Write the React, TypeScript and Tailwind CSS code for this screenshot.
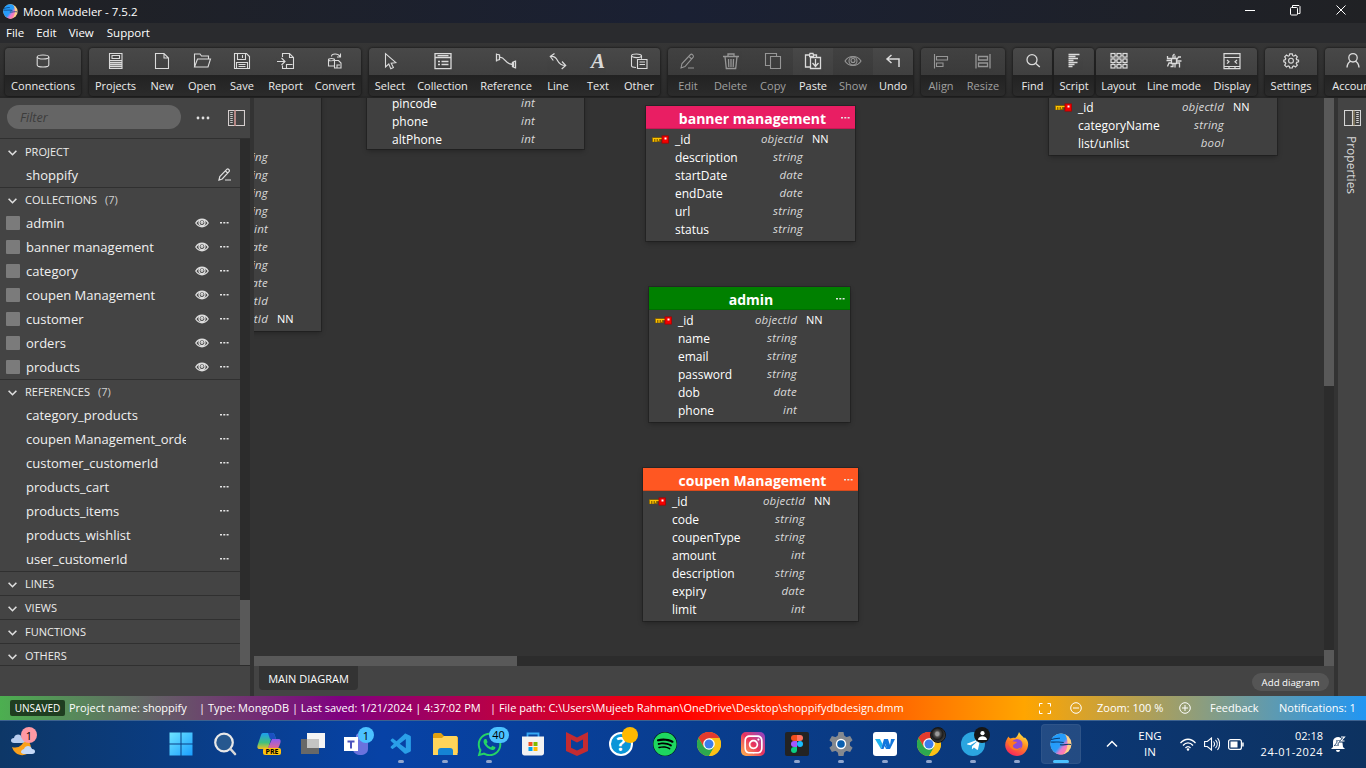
import React from "react";
import { FaWhatsapp, FaSpotify, FaInstagram, FaTelegramPlane } from "react-icons/fa";
import { VscVscode } from "react-icons/vsc";

type Kids = { children: React.ReactNode };

function Ico({ children, w = 20 }: Kids & { w?: number }) {
  return (
    <svg width={w} height={18} viewBox={`0 0 ${w} 18`} fill="none" stroke="currentColor" strokeWidth={1.1} className="block shrink-0 opacity-90">
      {children}
    </svg>
  );
}

const icons: Record<string, React.ReactNode> = {
  connections: (
    <Ico>
      <ellipse cx="10" cy="5" rx="5.800" ry="2" />
      <path d="M4.200 5v8c0 1 2.500 2 5.800 2s5.800-1 5.800-2V5" />
    </Ico>
  ),
  projects: (
    <Ico>
      <path d="M3.500 1.500h12.500v15h-12.500z M6 3.500h7.500v3h-7.500z M3.500 8.500h12.500" />
      <path d="M4 10.500h12 M4 12.500h12 M4 14.500h12" strokeWidth="1.300" />
    </Ico>
  ),
  new: (
    <Ico>
      <path d="M3.500 1.500h8.500l4.500 4.500v10.500h-13z M12 1.500v4.500h4.500" />
    </Ico>
  ),
  open: (
    <Ico>
      <path d="M2.500 14.500v-12.500h5.500l1.500 2h7v2.500 M2.500 15l3-8h13l-2.500 8z" />
    </Ico>
  ),
  save: (
    <Ico>
      <path d="M2.500 1.500h12l3 3v12h-15z M5.500 1.500v6h8v-6 M10.500 3v3 M4.500 16.500v-6h11v6 M6.500 12.500h7 M6.500 14.500h7" />
    </Ico>
  ),
  report: (
    <Ico>
      <path d="M6.500 5v-3.500h7l4 4v11h-11v-3 M13.500 1.500v4h4 M1 9.500h7.500 M5.500 6l3.500 3.500-3.500 3.500 M10.500 16v-3.500h6" />
    </Ico>
  ),
  convert: (
    <Ico>
      <path d="M3.500 7.500c0-1.300 6-1.300 6 0v6.500h-6z M3.500 8c1 1 4 1 6 0 M9.500 8.500h4l2.500 2.500v5h-6.500z M12 16v-3h3 M6.500 4.500c0-3 6.500-3.500 8.500 0 M15.500 1.500v3.500h-3.500" />
    </Ico>
  ),
  select: (
    <Ico>
      <path d="M5.500 1.700v13.300l3.300-3 2 4.800 2.600-1.200-2.200-4.400 4.600-.5z" />
    </Ico>
  ),
  collection: (
    <Ico>
      <path d="M2 1.600h16v15H2z M2 5.500h16 M4.500 3.600h11 M5 9.500h2 M8.500 9.500h7 M5 12.500h2 M8.500 12.500h7" strokeWidth="1.300" />
    </Ico>
  ),
  reference: (
    <Ico w={22}>
      <path d="M1.500 1.500v8 M1.500 2l3 1v4.500l-3 1 M4.500 5.200c6-.5 6 8 13 7 M20.500 8.500v8 M20.500 9l-3 1.500v4l3 1.500 M18.500 10v5" strokeWidth="1.300" />
    </Ico>
  ),
  line: (
    <Ico>
      <path d="M2.500 4.500c3-.5 5 0 7 4s4 5 8 5 M6.500 1.500l-4.200 3 3 4 M14 9.500l3.700 4-4 3.500" strokeWidth="1.200" />
    </Ico>
  ),
  other: (
    <Ico>
      <ellipse cx="7.500" cy="3.800" rx="5" ry="1.800" />
      <path d="M2.500 3.800v10c0 1 2 1.700 4.500 1.700 M12.500 3.800v3 M8.500 7.500h9.500v9h-9.500z M10.500 10h5.500 M10.500 12.500h5.500" />
    </Ico>
  ),
  edit: (
    <Ico>
      <path d="M3 16l1-4.500 8.500-9c1.300-1 3.700 1 2.700 2.600L7 14.500z M11 4.500l3 2.800 M10 16h6" />
    </Ico>
  ),
  delete: (
    <Ico>
      <path d="M2 4.500h16 M7 4V2h6v2 M4 4.500l1.300 12h9.400L16 4.500 M7.500 7l.3 8 M10 7v8 M12.500 7l-.3 8" strokeWidth="1.300" />
    </Ico>
  ),
  copy: (
    <Ico>
      <path d="M7.500 4.500h10v12h-10z M13.500 4v-2.500h-11v12h4.500" />
    </Ico>
  ),
  paste: (
    <Ico>
      <path d="M7.500 5.500h10v11h-10z M13.500 5v-2h-3l-.5-1.500h-3l-.5 1.500h-4v12h4.500 M6 4.500h5 M12.500 7v7 M9.500 11l3 3.500 3-3.500" strokeWidth="1.300" />
    </Ico>
  ),
  show: (
    <Ico>
      <path d="M2 9c3.500-6 12.500-6 16 0-3.500 6-12.500 6-16 0z" />
      <circle cx="10" cy="9" r="4" />
      <circle cx="10" cy="8.500" r="2" />
    </Ico>
  ),
  undo: (
    <Ico>
      <path d="M8.500 3L4 7l4.500 4 M4 7h12v8" strokeWidth="1.500" />
    </Ico>
  ),
  align: (
    <Ico>
      <path d="M3.500 2v14.500 M5.500 4.500h11v3.500h-11z M5.500 11h6.500v3.500H5.500z" />
    </Ico>
  ),
  resize: (
    <Ico>
      <path d="M3 2v14.500 M17 2v14.500 M5.500 4.500h9v3.500h-9z M5.500 11h9v3.500h-9z" strokeWidth="1.300" />
    </Ico>
  ),
  find: (
    <Ico>
      <circle cx="9" cy="7.700" r="5" strokeWidth="1.300" />
      <path d="M12.800 11.500l4 3.500" strokeWidth="1.400" />
    </Ico>
  ),
  script: (
    <Ico>
      <path d="M4.500 2.500h11 M4.500 4.500h7 M4.500 6.500h9.500 M4.500 8.500h5 M4.500 10.500h9 M4.500 12.500h6 M4.500 14.500h4" strokeWidth="1.300" />
    </Ico>
  ),
  layout: (
    <Ico>
      {[1.5, 7, 12.5].map((y) =>
        [2, 8, 14].map((x) => <rect key={`${x}-${y}`} x={x} y={y} width="4" height="3.500" strokeWidth="1.200" />)
      )}
      <path d="M6 3.300h2 M12 3.300h2 M6 8.800h2 M12 8.800h2 M6 14.300h2 M12 14.300h2 M4 5v2 M10 5v2 M16 5v2 M4 10.500v2 M10 10.500v2 M16 10.500v2" strokeWidth=".8" />
    </Ico>
  ),
  linemode: (
    <Ico>
      <path d="M7.500 6.500h5v5h-5z M9 6.500V3.500l1.500-1.500 M11 6.500v-3 M3.500 4v2.500h4 M17 5h-2.500l-1.500 2.500 M2.500 8.500h5 M12.500 9h5 M7.500 11h-2.500l-1.500 3.500 M12.500 11h3v4.500 M9 11.500v3h-2.500 M11 11.500v4" strokeWidth="1.300" />
    </Ico>
  ),
  display: (
    <Ico>
      <path d="M2 1.600h16v15H2z M2 5.500h16 M2 14.500h16 M5 8l2 1.800-2 1.800 M15 8l-2 1.800 2 1.800 M7 14.500v2 M13 14.500v2" strokeWidth="1.200" />
    </Ico>
  ),
  settings: (
    <Ico>
      <path d="M8.600 2h2.800l.5 2.100 1.200.5 1.900-1.200 2 2-1.200 1.900.5 1.200 2.100.5v2l-2.100.5-.5 1.200 1.200 1.900-2 2-1.900-1.200-1.200.5-.5 1.900H8.600l-.5-1.900-1.200-.5L5 16.600l-2-2 1.200-1.900-.5-1.200L2 11V9l1.700-.5.500-1.200L3 5.400l2-2 1.900 1.200 1.200-.5z" transform="translate(1 0) scale(.9)" strokeWidth="1.300" />
      <circle cx="10" cy="8.700" r="2.400" />
    </Ico>
  ),
  account: (
    <Ico>
      <circle cx="10" cy="5.800" r="4.200" strokeWidth="1.300" />
      <path d="M4 15.500c.3-4 2-5.500 4-6.300 M16 15.500c-.3-4-2-5.500-4-6.300" strokeWidth="1.400" />
    </Ico>
  ),
};

type Btn = { id: string; label: string; w: string; off?: boolean };

function ToolButton({ b }: { b: Btn }) {
  return (
    <div className={`flex h-[45px] shrink-0 flex-col ${b.w} ${b.off ? "text-[#a0a0a0]" : "text-[#ececec]"}`}>
      <div className={`flex h-[27px] items-center justify-center pb-px ${b.off ? "bg-linear-to-b from-[#414141] to-[#3a3a3a]" : "bg-linear-to-b from-[#484848] to-[#404040]"}`}>
        {b.id === "text" ? (
          <span className="font-['Liberation_Serif',serif] text-[21px] leading-none font-bold italic opacity-90">A</span>
        ) : (
          icons[b.id]
        )}
      </div>
      <div className="flex h-[18px] justify-center bg-linear-to-b from-[#222] to-[#2a2a2a] text-[11px] leading-[21px] whitespace-nowrap">{b.label}</div>
    </div>
  );
}

function Group({ items }: { items: Btn[] }) {
  return (
    <div className="flex shrink-0 overflow-hidden rounded-[4px] shadow-[0_0_2px_1px_rgba(0,0,0,0.35)]">
      {items.map((b) => (
        <ToolButton key={b.label} b={b} />
      ))}
    </div>
  );
}

const groups: Btn[][] = [
  [{ id: "connections", label: "Connections", w: "w-[76px]" }],
  [
    { id: "projects", label: "Projects", w: "w-[53px]" },
    { id: "new", label: "New", w: "w-10" },
    { id: "open", label: "Open", w: "w-10" },
    { id: "save", label: "Save", w: "w-10" },
    { id: "report", label: "Report", w: "w-[47px]" },
    { id: "convert", label: "Convert", w: "w-[52px]" },
  ],
  [
    { id: "select", label: "Select", w: "w-[42px]" },
    { id: "collection", label: "Collection", w: "w-[63px]" },
    { id: "reference", label: "Reference", w: "w-16" },
    { id: "line", label: "Line", w: "w-10" },
    { id: "text", label: "Text", w: "w-10" },
    { id: "other", label: "Other", w: "w-[42px]" },
  ],
  [
    { id: "edit", label: "Edit", w: "w-10", off: true },
    { id: "delete", label: "Delete", w: "w-[45px]", off: true },
    { id: "copy", label: "Copy", w: "w-10", off: true },
    { id: "paste", label: "Paste", w: "w-10" },
    { id: "show", label: "Show", w: "w-10", off: true },
    { id: "undo", label: "Undo", w: "w-10" },
  ],
  [
    { id: "align", label: "Align", w: "w-10", off: true },
    { id: "resize", label: "Resize", w: "w-11", off: true },
  ],
];

function Dots({ big }: { big?: boolean }) {
  return big ? (
    <svg width="14" height="4" viewBox="0 0 14 4" fill="#e0e0e0">
      <circle cx="2" cy="2" r="1.400" /><circle cx="7" cy="2" r="1.400" /><circle cx="12" cy="2" r="1.400" />
    </svg>
  ) : (
    <svg width="9" height="2" viewBox="0 0 9 2" fill="#e4e4e4">
      <path d="M0 0h2v1.600H0z M3.300 0h2v1.600h-2z M6.600 0h2v1.600h-2z" />
    </svg>
  );
}

function Eye() {
  return (
    <svg width="14" height="10" viewBox="0 0 14 10" fill="none" stroke="#dedede" strokeWidth="1.300">
      <path d="M.8 5c3-5 9.400-5 12.400 0-3 5-9.400 5-12.400 0z" />
      <circle cx="7" cy="4.700" r="3" />
      <circle cx="7" cy="4.300" r="1" />
    </svg>
  );
}

function Head({ title, count, short }: { title: string; count?: string; short?: boolean }) {
  return (
    <div className={`flex items-center overflow-hidden pl-2 text-[#ececec] ${short ? "h-[21px] pt-[3px]" : "h-6"}`}>
      <svg width="9" height="6" viewBox="0 0 9 6" fill="none" stroke="#e0e0e0" strokeWidth="1.600" className="mt-0.5 shrink-0">
        <path d="M.6.8l3.900 3.900L8.400.8" />
      </svg>
      <span className="mb-px ml-2 text-[11px] leading-6">{title}</span>
      {count && <span className="mb-px ml-2 text-[11px] leading-6 text-[#cfcfcf]">{count}</span>}
    </div>
  );
}

function Row({ name, box, eye }: { name: string; box?: boolean; eye?: boolean }) {
  return (
    <div className="flex h-6 items-center pl-1.5 text-[#f0f0f0]">
      <div className={`mb-0.5 h-[14px] w-[14px] shrink-0 rounded-[1px] ${box ? "bg-[#7b7b7b]" : ""}`} />
      <span className="mb-0.5 ml-1.5 w-[160px] shrink-0 overflow-hidden text-[13px] leading-6 whitespace-nowrap">{name}</span>
      <div className="ml-[9px] flex w-[14px] pb-0.5">{eye && <Eye />}</div>
      <div className="ml-[11px] pb-0.5"><Dots /></div>
    </div>
  );
}

function Sidebar() {
  return (
    <div className="flex w-[250px] shrink-0 flex-col bg-[#444]">
      <div className="flex h-[41px] shrink-0 items-center border-b border-[#303030] pl-[7px]">
        <div className="mb-0.5 flex h-6 w-[174px] items-center rounded-full bg-[#656565] pt-0.5 pl-[13px] text-[12.500px] text-[#3c3c3c] italic">Filter</div>
        <div className="ml-[15px] flex"><Dots big /></div>
        <svg width="17" height="16" viewBox="0 0 17 16" fill="none" stroke="#d6cfcf" className="ml-[18px]">
          <path d="M.5.500h16v15H.5z M7 1v14" strokeWidth="1.100" />
          <path d="M3.500 2v12" stroke="#c8c8c8" strokeDasharray="1 1" strokeWidth="2.500" />
          <path d="M7 0v16" stroke="#c48480" strokeWidth="1.400" />
        </svg>
      </div>
      <div className="flex h-[527px]">
        <div className="w-[240px] overflow-hidden">
          <div className="h-[49px] border-b border-[#303030] pt-px">
            <Head title="PROJECT" />
            <div className="flex h-[23px] items-center pl-[26px] text-[13px] text-[#f0f0f0]">
              <span className="w-[192px]">shoppify</span>
              <svg width="14" height="13" viewBox="0 0 14 13" fill="none" stroke="#e0e0e0" strokeWidth="1.200" className="mb-0.5">
                <path d="M1 12l.8-3.500L9 1.200c1-.8 3 .8 2.200 2.200L4.200 11z M7.500 3l2.200 2 M7 12h6" />
              </svg>
            </div>
          </div>
          <div className="h-48 border-b border-[#303030]">
            <Head title="COLLECTIONS" count="(7)" />
            {["admin", "banner management", "category", "coupen Management", "customer", "orders", "products"].map((n) => (
              <Row key={n} name={n} box eye />
            ))}
          </div>
          <div className="h-48 border-b border-[#303030]">
            <Head title="REFERENCES" count="(7)" />
            {["category_products", "coupen Management_orders", "customer_customerId", "products_cart", "products_items", "products_wishlist", "user_customerId"].map((n) => (
              <Row key={n} name={n} />
            ))}
          </div>
          {["LINES", "VIEWS", "FUNCTIONS"].map((n) => (
            <div key={n} className="h-6 border-b border-[#303030]"><Head title={n} /></div>
          ))}
          <div className="h-[22px] border-b border-[#303030]"><Head title="OTHERS" short /></div>
        </div>
        <div className="flex w-[10px] flex-col justify-end bg-[#2c2c2c]"><div className="mb-px h-[65px] bg-[#595959]" /></div>
      </div>
    </div>
  );
}

type Field = [string, string, boolean?];

function KeyIcon() {
  return (
    <svg width="17" height="9" viewBox="0 0 17 9" className="shrink-0">
      <path d="M0 2.300h10.500v2.400H8.500v2.300H0z" fill="#8a6500" />
      <path d="M.8 3.500h10 M1.500 3v3.800 M4 3.500v3.300 M6.500 3.500v2.300" stroke="#ffc400" strokeWidth="1.200" />
      <rect x="10" y=".9" width="6.500" height="7.200" fill="#f50000" stroke="#a80000" strokeWidth=".8" />
      <rect x="12.500" y="2.500" width="2" height="2" fill="#fff" />
    </svg>
  );
}

function Fields({ rows, nameW, typeW, pad }: { rows: Field[]; nameW: string; typeW: string; pad: string }) {
  return (
    <>
      {rows.map(([n, t, key], i) => (
        <div key={i} className={`flex h-[18px] text-[12px] leading-[20px] whitespace-nowrap text-white ${pad}`}>
          <div className="w-[23px] shrink-0 pt-[5px]">{key && <KeyIcon />}</div>
          <div className={`${nameW} shrink-0`}>{n}</div>
          <div className={`${typeW} shrink-0 text-right text-[11.500px] leading-[18px] tracking-[0.200px] text-[#d8d8d8] italic`}>{t}</div>
          {key && <div className="ml-[9px] text-[11px] leading-[18px]">NN</div>}
        </div>
      ))}
    </>
  );
}

const shadow = "shadow-[0_0_0_1px_rgba(0,0,0,0.2),0_2px_5px_rgba(0,0,0,0.3)]";

function Card({ pos, head, title, tpad, dots, children }: Kids & { pos: string; head: string; title: string; tpad: string; dots: string }) {
  return (
    <div className={`absolute bg-[#404040] ${shadow} ${pos}`}>
      <div className={`relative h-[23px] border-b border-black/15 text-center text-[14px] leading-[25px] font-bold text-white ${head} ${tpad}`}>
        {title}
        <div className={`absolute top-[11px] flex ${dots}`}><Dots /></div>
      </div>
      <div className="pt-px">{children}</div>
    </div>
  );
}

function Canvas() {
  return (
    <div className="relative min-w-0 flex-1 overflow-hidden bg-[#333]">
      <div className={`absolute top-[-20px] left-[-40px] h-[253px] w-[107px] bg-[#404040] pt-[70px] ${shadow}`}>
        {["string", "string", "string", "string", "int", "date", "string", "date", "objectId", "objectId"].map((t, i) => (
          <div key={i} className="flex h-[18px] leading-[18px] text-white">
            <span className="flex w-[54px] justify-end text-[11.500px] tracking-[0.200px] text-[#d8d8d8] italic">{t}</span>
            {i === 9 && <span className="ml-[9px] text-[11px]">NN</span>}
          </div>
        ))}
      </div>
      <div className={`absolute top-[-20px] left-[113px] h-[71px] w-[217px] bg-[#404040] pt-4 ${shadow}`}>
        <Fields rows={[["pincode", "int"], ["phone", "int"], ["altPhone", "int"]]} nameW="w-[85px]" typeW="w-[58px]" pad="pl-0.5" />
      </div>
      <div className={`absolute top-[-10px] left-[795px] h-[67px] w-[228px] bg-[#404040] pt-[10px] ${shadow}`}>
        <Fields rows={[["_id", "objectId", true], ["categoryName", "string"], ["list/unlist", "bool"]]} nameW="w-[92px]" typeW="w-[54px]" pad="pl-1.5" />
      </div>
      <Card pos="top-[8px] left-[392px] h-[135px] w-[209px]" head="bg-[#e91e63]" title="banner management" tpad="pl-1" dots="right-[5px]">
        <Fields rows={[["_id", "objectId", true], ["description", "string"], ["startDate", "date"], ["endDate", "date"], ["url", "string"], ["status", "string"]]} nameW="w-[74px]" typeW="w-[54px]" pad="pl-1.5" />
      </Card>
      <Card pos="top-[189px] left-[395px] h-[135px] w-[201px]" head="bg-[#008000]" title="admin" tpad="pl-[3px]" dots="right-[5px]">
        <Fields rows={[["_id", "objectId", true], ["name", "string"], ["email", "string"], ["password", "string"], ["dob", "date"], ["phone", "int"]]} nameW="w-[65px]" typeW="w-[54px]" pad="pl-1.5" />
      </Card>
      <Card pos="top-[370px] left-[389px] h-[153px] w-[215px]" head="bg-[#ff5722]" title="coupen Management" tpad="pl-1" dots="right-[5px]">
        <Fields rows={[["_id", "objectId", true], ["code", "string"], ["coupenType", "string"], ["amount", "int"], ["description", "string"], ["expiry", "date"], ["limit", "int"]]} nameW="w-[79px]" typeW="w-[54px]" pad="pl-1.5" />
      </Card>
    </div>
  );
}

function Moon({ size }: { size: number }) {
  return (
    <svg width={size} height={size} viewBox="0 0 22 22">
      <defs>
        <linearGradient id={`moon${size}`} x1="0.100" y1="0.100" x2=".9" y2="0.900">
          <stop offset="0" stopColor="#1b9cff" /><stop offset=".58" stopColor="#2b9cf8" /><stop offset=".75" stopColor="#e07cd0" /><stop offset=".9" stopColor="#ff7cb0" />
        </linearGradient>
      </defs>
      <circle cx="11" cy="11" r="10.500" fill="#ffd08a" />
      <path d="M11 .5a10.500 10.500 0 1 0 3 20.500c4-5 5-14 1-19.700A10.500 10.500 0 0 0 11 .5z" fill={`url(#moon${size})`} />
      <path d="M.7 9c5 .5 8-.8 13 .5 M1 6.500c4-.5 5-1.500 9-1.200 M10 11.800c4 .6 7-1.200 11-.3" stroke="#0d3c73" strokeWidth="1.100" fill="none" />
    </svg>
  );
}

function Chrome() {
  return (
    <svg width="24" height="24" viewBox="0 0 24 24">
      <circle cx="12" cy="12" r="12" fill="#fbc116" />
      <path d="M1.600 6A12 12 0 0 1 22.400 6H12z" fill="#e33b2e" />
      <path d="M1.600 6A12 12 0 0 1 12 0l1 6-6.200 9z" fill="#e33b2e" />
      <path d="M1.600 6A12 12 0 0 0 12 24l5.200-9L12 12l-5.200 3z" fill="#2da94f" />
      <path d="M22.400 6A12 12 0 0 1 12 24l5.200-9L12 6z" fill="#fbc116" />
      <circle cx="12" cy="12" r="5.800" fill="#fff" /><circle cx="12" cy="12" r="4.500" fill="#3b7ded" />
    </svg>
  );
}

function TaskIcon({ children, run, active }: Kids & { run?: boolean; active?: boolean }) {
  return (
    <div className="relative flex h-12 w-11 shrink-0 items-center justify-center">
      {active && <div className="absolute inset-x-0.5 top-1 bottom-1 rounded-[4px] border border-white/5 bg-white/10" />}
      <div className="relative flex">{children}</div>
      {run && <div className={`absolute bottom-[5px] h-[3px] rounded-full ${active ? "w-4 bg-[#4cc2ff]" : "w-1.5 bg-[#8fa5cd]"}`} />}
    </div>
  );
}

function Badge({ children, cls }: Kids & { cls: string }) {
  return <div className={`absolute flex h-4 items-center justify-center rounded-full text-[11px] leading-none text-black ${cls}`}>{children}</div>;
}

function Taskbar() {
  return (
    <div className="flex h-12 shrink-0 items-center bg-linear-to-r from-[#0d3767] via-[#0742a6] via-[28%] to-[#0d3260] text-white shadow-[inset_0_1px_0_#3d6290]">
      <div className="relative ml-[9px] flex h-12 w-[150px] items-center">
        <svg width="30" height="30" viewBox="0 0 30 30">
          <path d="M3 18c6 2 12-2 12-8 8 2 9 12 3 15-6 3-13 0-15-7z" fill="#f9a01b" />
          <path d="M5 14c-4 0-4-5 0-5 1-5 8-4 8 0 4 0 4 5 0 5z" fill="#b8cdef" />
          <path d="M15 25c-4 0-4-4 0-5 1-4 7-4 8 0 4 0 4 5 0 5z" fill="#c6daf8" />
        </svg>
        <Badge cls="left-[12px] top-[7px] w-4 bg-[#ff99a4]">1</Badge>
      </div>
      <TaskIcon>
        <svg width="24" height="24" viewBox="0 0 24 24">
          <defs><linearGradient id="win" x1="0" y1="0" x2="1" y2="1"><stop offset="0" stopColor="#6ee4ff" /><stop offset="1" stopColor="#1a9fff" /></linearGradient></defs>
          <path d="M.5.500h11v11H.5z M12.500.5h11v11h-11z M.5 12.500h11v11H.5z M12.500 12.500h11v11h-11z" fill="url(#win)" />
        </svg>
      </TaskIcon>
      <TaskIcon>
        <svg width="24" height="24" viewBox="0 0 24 24" fill="none"><circle cx="11" cy="10.500" r="8.800" fill="#26588f" stroke="#e8e8e8" strokeWidth="2.200" /><path d="M17.500 17l4.500 5" stroke="#d8d8d8" strokeWidth="2.600" strokeLinecap="round" /></svg>
      </TaskIcon>
      <TaskIcon>
        <svg width="24" height="24" viewBox="0 0 24 24">
          <defs>
            <linearGradient id="cpa" x1="0" y1="0" x2="0" y2="1"><stop offset="0" stopColor="#1c9ff0" /><stop offset=".6" stopColor="#40c080" /><stop offset="1" stopColor="#f0c020" /></linearGradient>
            <linearGradient id="cpb" x1="0" y1="0" x2="0" y2="1"><stop offset="0" stopColor="#8a5cf0" /><stop offset="1" stopColor="#f06a80" /></linearGradient>
          </defs>
          <path d="M6 1h9c2 0 2.500 1 3 3l1 3h-5L11 17H3c-3 0-3-2-2-5L4 3c.4-1.200 1-2 2-2z" fill="url(#cpa)" />
          <path d="M15 7h6c3 0 3 2 2 5l-2.500 6H10z" fill="url(#cpb)" />
          <path d="M11 1h4c2 0 2.500 1 3 3l1 3h-6z" fill="#1b4fc0" />
        </svg>
        <div className="absolute top-[16px] left-[6px] flex h-[7px] w-[18px] items-center justify-center rounded-[2px] bg-[#ffc20e] text-[7px] leading-none font-bold text-black">PRE</div>
      </TaskIcon>
      <TaskIcon>
        <svg width="24" height="22" viewBox="0 0 24 22"><path d="M6 0h18v15H6z" fill="#f4f4f4" /><path d="M0 6h18v15H0z" fill="#686868" /><path d="M6 6h12v9H6z" fill="#c4c4c4" /></svg>
      </TaskIcon>
      <TaskIcon>
        <svg width="26" height="24" viewBox="0 0 26 24"><circle cx="16" cy="5" r="4" fill="#7b83eb" /><path d="M9 8h15v9c0 8-15 8-15 0z" fill="#6a72dd" /><path d="M0 5h14v14H0z" fill="#fff" /><path d="M3.500 8.500h7v2H8v6H6v-6H3.500z" fill="#4b53bc" /></svg>
        <Badge cls="-top-[5px] left-[14px] w-4 bg-[#4cc2ff]">1</Badge>
      </TaskIcon>
      <TaskIcon run><VscVscode size={25} color="#2a9fe8" /></TaskIcon>
      <TaskIcon run>
        <svg width="26" height="22" viewBox="0 0 26 22"><path d="M1 2c0-1 .5-2 2-2h6l3 3h12c1 0 2 1 2 2v15H1z" fill="#e0a010" /><path d="M1 5h9l2-2h12c1 0 1.500 1 1.500 2v17H1z" fill="#ffd45a" /><path d="M6 22v-4c0-2 1-3 3-3h9c2 0 3 1 3 3v4z" fill="#1583d4" /></svg>
      </TaskIcon>
      <TaskIcon run><FaWhatsapp size={27} color="#25d366" /><Badge cls="-top-[4px] left-[13px] w-5 bg-[#4cc2ff]">40</Badge></TaskIcon>
      <TaskIcon>
        <svg width="24" height="24" viewBox="0 0 24 24"><path d="M6.500 5V1.500h11V5" stroke="#35a8f5" strokeWidth="1.800" fill="none" /><path d="M1 4.500h22V21c0 1.500-1 2.500-2.500 2.500h-17C2 23.500 1 22.500 1 21z" fill="#f2f2f2" /><path d="M7.500 10H11.500v4h-4z" fill="#f25022" /><path d="M12.500 10h4v4h-4z" fill="#7fba00" /><path d="M7.500 15h4v4h-4z" fill="#00a4ef" /><path d="M12.500 15h4v4h-4z" fill="#ffb900" /></svg>
      </TaskIcon>
      <TaskIcon>
        <svg width="22" height="24" viewBox="0 0 22 24"><path d="M0 0l11 5.500L22 0v19l-11 5-11-5z M5 7.500v8.300l6 2.800 6-2.800V7.500l-6 3z" fill="#c32b31" fillRule="evenodd" /></svg>
      </TaskIcon>
      <TaskIcon>
        <div className="flex h-6 w-6 items-center justify-center rounded-full border-2 border-white bg-[#0a96d8] text-[19px] leading-none font-bold">?</div>
        <div className="absolute -top-[5px] left-[13px] h-4 w-4 rounded-full bg-[#ffb900]" />
      </TaskIcon>
      <TaskIcon><div className="flex rounded-full bg-black"><FaSpotify size={24} color="#1ed760" /></div></TaskIcon>
      <TaskIcon><Chrome /></TaskIcon>
      <TaskIcon>
        <div className="flex h-6 w-6 items-center justify-center rounded-[5px] bg-linear-to-tr from-[#fdb747] via-[#e8305c] to-[#8a3ac8]"><FaInstagram size={21} color="#fff" /></div>
      </TaskIcon>
      <TaskIcon run>
        <div className="flex h-6 w-6 items-center justify-center rounded-[2px] bg-[#232323]">
          <svg width="12" height="18" viewBox="0 0 12 18"><path d="M6 0H3a3 3 0 0 0 0 6h3z" fill="#f24e1e" /><path d="M6 0h3a3 3 0 0 1 0 6H6z" fill="#ff7262" /><path d="M6 6H3a3 3 0 0 0 0 6h3z" fill="#a259ff" /><circle cx="9" cy="9" r="3" fill="#1abcfe" /><path d="M6 12H3a3 3 0 1 0 3 3z" fill="#0acf83" /></svg>
        </div>
      </TaskIcon>
      <TaskIcon run>
        <svg width="24" height="24" viewBox="0 0 24 24"><g fill="#85898f"><circle cx="12" cy="12" r="9" /><path d="M9.500 0h5l1 5h-7z M9.500 24h5l1-5h-7z M.4 8.200l2.500-4.300L7.700 5.600l-3.500 6z M23.600 8.200l-2.500-4.300-4.800 1.700 3.500 6z M.4 15.800l2.500 4.300 4.800-1.700-3.500-6z M23.600 15.800l-2.500 4.300-4.800-1.700 3.500-6z" /></g><circle cx="12" cy="12" r="5.200" fill="#fff" /><circle cx="12" cy="12" r="3.800" fill="#0a5fb0" /></svg>
      </TaskIcon>
      <TaskIcon run>
        <div className="flex h-6 w-6 items-center justify-center rounded-[3px] bg-white">
          <svg width="20" height="12" viewBox="0 0 20 12"><path d="M0 1h5l2.500 5L6 11z" fill="#1db3f0" /><path d="M6 11l3-8 3 8h-1L9 6.500 7 11z M6 11L9 1l4 0 2 6 1-6h4l-5 10h-3L10.500 6 8.500 11z" fill="#1277dd" /></svg>
        </div>
      </TaskIcon>
      <TaskIcon run>
        <Chrome />
        <div className="absolute -top-[5px] left-[13px] h-4 w-4 rounded-full border border-[#161616] bg-[radial-gradient(ellipse_at_45%_42%,#9a9a9a_0_15%,#4a4a4a_28%,#1c1c1c_50%,#444_75%,#111_100%)]" />
      </TaskIcon>
      <TaskIcon run>
        <div className="flex h-6 w-6 items-center justify-center rounded-full bg-[#2ba5e0]"><FaTelegramPlane size={15} color="#fff" /></div>
        <div className="absolute -top-[5px] left-[13px] flex h-4 w-4 items-center justify-center rounded-full bg-[#161616]">
          <svg width="9" height="9" viewBox="0 0 9 9" fill="#fff"><circle cx="4.500" cy="2.200" r="2.100" /><path d="M0 9c0-5 9-5 9 0z" /></svg>
        </div>
      </TaskIcon>
      <TaskIcon run>
        <svg width="24" height="24" viewBox="0 0 24 24">
          <defs><linearGradient id="ff" x1=".8" y1="0" x2=".3" y2="1"><stop offset="0" stopColor="#fff04a" /><stop offset=".45" stopColor="#ff8f1f" /><stop offset="1" stopColor="#f6215e" /></linearGradient></defs>
          <path d="M3.500 4.500c.5 1 1 1.500 2 2C7 5.500 9 5.500 10 6c1.500-.5 3-3 4-6 1 3 3.500 3.500 5 6l1-.5C23 8.500 23.500 11 23 14c-1 6-5.500 10-11 10S0 19.500.2 13C.3 9 2 7 3.500 4.500z" fill="url(#ff)" />
          <circle cx="12" cy="12.500" r="5.500" fill="#8a4bd8" /><path d="M3 10c3-2 6 0 9 0-1 2-4 2-4 4 0 3 5 4 8 1-1 5-11 5-13-5z" fill="#ff7a1f" />
        </svg>
      </TaskIcon>
      <TaskIcon run active><Moon size={22} /></TaskIcon>
      <svg width="12" height="8" viewBox="0 0 12 8" fill="none" stroke="#fff" strokeWidth="1.500" className="ml-[23px]"><path d="M1 6.500l5-5 5 5" /></svg>
      <div className="ml-5 w-6 text-center text-[11.500px] leading-4 whitespace-nowrap">ENG<br />IN</div>
      <svg width="16" height="13" viewBox="0 0 16 13" fill="none" stroke="#fff" strokeWidth="1.300" className="ml-[18px]">
        <path d="M.5 5c4.500-5 10.500-5 15 0 M3 7.500c3-3.500 7-3.500 10 0 M5.500 10c1.500-1.800 3.500-1.800 5 0" /><circle cx="8" cy="11.500" r="1.200" fill="#fff" stroke="none" />
      </svg>
      <svg width="16" height="14" viewBox="0 0 16 14" fill="none" stroke="#fff" strokeWidth="1.100" className="ml-2">
        <path d="M.6 4.500h2.700L7.500 1v12L3.300 9.500H.6z M9.500 4.500c1.200 1.400 1.200 3.600 0 5 M11.500 2.800c2.200 2.400 2.200 6 0 8.400 M13.500 1c2.800 3.400 2.800 8.600 0 12" />
      </svg>
      <svg width="16" height="11" viewBox="0 0 16 11" className="ml-2"><rect x=".6" y=".6" width="12.800" height="9.800" rx="2" fill="none" stroke="#fff" strokeWidth="1.200" /><path d="M2.500 2.500h7v6h-7z M14.200 3.500h1.500v4h-1.500z" fill="#fff" /></svg>
      <div className="ml-4 w-[63px] text-right text-[11px] leading-4 whitespace-nowrap">02:18<br /><span className="tracking-[0.500px]">24-01-2024</span></div>
      <svg width="16" height="16" viewBox="0 0 16 16" className="ml-2"><path d="M2 11V6a5 5 0 0 1 9-3l1 8 2 2H0z M5 14h4a2 2 0 0 1-4 0z" fill="#fff" /><path d="M5 5h3l-3 4h3 M9.500 1h4l-4 4.500h4" stroke="#0d3260" strokeWidth="2.200" fill="none" /><path d="M5 5h3l-3 4h3 M10 1h3.500l-3.500 4h3.500" stroke="#fff" strokeWidth="1.100" fill="none" /></svg>
    </div>
  );
}

export default function App() {
  return (
    <div className="flex h-[768px] w-[1366px] flex-col overflow-hidden bg-[#333] font-['Open_Sans','Noto_Sans',sans-serif]">
      <div className="flex h-[23px] shrink-0 items-center bg-linear-to-r from-[#202124] via-[#1a2033] to-[#202124] pl-[3px] text-white">
        <Moon size={15} />
        <span className="ml-[5px] text-[11.500px] leading-[23px]">Moon Modeler - 7.5.2</span>
        <svg width="110" height="12" viewBox="0 0 110 12" fill="none" stroke="#fff" className="mr-[15px] mb-[3px] ml-auto">
          <path d="M4 6.500h10 M95.500 1.500l9 9 M104.500 1.500l-9 9" /><rect x="49.500" y="3.500" width="7" height="7.500" rx="1" /><path d="M51.500 3V1.500h6.500l1 1v7h-1.800" />
        </svg>
      </div>
      <div className="flex h-5 shrink-0 items-center gap-3 bg-[#2a2b2e] pl-1.5 text-[11.500px] text-white">
        <span>File</span><span>Edit</span><span>View</span><span className="ml-px">Support</span>
      </div>
      <div className="flex h-[55px] shrink-0 gap-2 border-b-2 border-[#262626] bg-linear-to-b from-[#353535] to-[#2a2a2a] pt-[5px] pl-[5px]">
        {groups.map((g, i) => <Group key={i} items={g} />)}
        <div className="flex gap-0.5">
          <Group items={[{ id: "find", label: "Find", w: "w-[39px]" }]} />
          <Group items={[{ id: "script", label: "Script", w: "w-10" }]} />
          <Group items={[{ id: "layout", label: "Layout", w: "w-[45px]" }, { id: "linemode", label: "Line mode", w: "w-[66px]" }, { id: "display", label: "Display", w: "w-[50px]" }]} />
        </div>
        <Group items={[{ id: "settings", label: "Settings", w: "w-[52px]" }]} />
        <Group items={[{ id: "account", label: "Account", w: "w-[56px]" }]} />
      </div>
      <div className="flex h-[598px] shrink-0">
        <Sidebar />
        <div className="w-1 bg-[#333]" />
        <div className="flex w-[1080px] flex-col">
          <div className="flex h-[568px]">
            <div className="flex min-w-0 flex-1 flex-col">
              <Canvas />
              <div className="h-[10px] bg-[#2c2c2c]"><div className="h-full w-[263px] bg-[#595959]" /></div>
            </div>
            <div className="flex w-[10px] flex-col justify-between bg-[#2c2c2c]"><div className="h-[288px] bg-[#595959]" /><div className="h-4 bg-[#595959]" /></div>
          </div>
          <div className="flex h-[30px] items-start justify-between bg-[#444] pr-[5px] pl-[5px]">
            <div className="flex h-6 w-[99px] items-center justify-center rounded-b-[4px] bg-[#333] pt-0.5 text-[11px] whitespace-nowrap text-white">MAIN DIAGRAM</div>
            <div className="mt-[7px] flex h-[18px] w-[77px] items-center justify-center rounded-full bg-[#555] pt-0.5 text-[9.700px] whitespace-nowrap text-white">Add diagram</div>
          </div>
        </div>
        <div className="w-1 bg-[#333]" />
        <div className="flex flex-1 flex-col items-center bg-[#444] pt-3">
          <svg width="17" height="16" viewBox="0 0 17 16" fill="none" stroke="#d6d6d6">
            <path d="M.5.500h16v15H.5z M8.500 1v14" strokeWidth="1.100" /><path d="M10 0v16" stroke="#b5a070" /><path d="M13.500 2v12" strokeDasharray="1 1" strokeWidth="2.500" />
          </svg>
          <div className="mt-[10px] pr-0.5 text-[12px] leading-[18px] text-[#d6d6d6] [writing-mode:vertical-rl]">Properties</div>
        </div>
      </div>
      <div className="flex h-6 shrink-0 items-center bg-linear-[to_right,#4caf50,#800080,#ff0000,#ffa500,#2196f3] pl-[10px] text-[11px] whitespace-pre text-white">
        <div className="flex h-4 w-[55px] items-center justify-center rounded-[2px] bg-[#1f3d20] text-[10px]">UNSAVED</div>
        <span className="ml-1 w-[130px]">Project name: shoppify</span>
        <span className="w-[291px]">| Type: MongoDB | Last saved: 1/21/2024 | 4:37:02 PM</span>
        <span className="w-[549px]">| File path: C:\Users\Mujeeb Rahman\OneDrive\Desktop\shoppifydbdesign.dmm</span>
        <svg width="12" height="11" viewBox="0 0 12 11" fill="none" stroke="#fff"><path d="M.5 3.500v-3h3 M8.500.5h3v3 M11.500 7.500v3h-3 M3.500 10.500h-3v-3" /></svg>
        <svg width="12" height="12" viewBox="0 0 12 12" fill="none" stroke="#fff" className="ml-[19px]"><circle cx="6" cy="6" r="5.300" /><path d="M3 6h6" /></svg>
        <span className="ml-[15px] w-[67px]">Zoom: 100 %</span>
        <svg width="12" height="12" viewBox="0 0 12 12" fill="none" stroke="#fff" className="ml-[15px]"><circle cx="6" cy="6" r="5.300" /><path d="M3 6h6 M6 3v6" /></svg>
        <span className="mt-px ml-[19px] w-[69px]">Feedback</span>
        <span className="mt-px">Notifications: 1</span>
      </div>
      <Taskbar />
    </div>
  );
}
